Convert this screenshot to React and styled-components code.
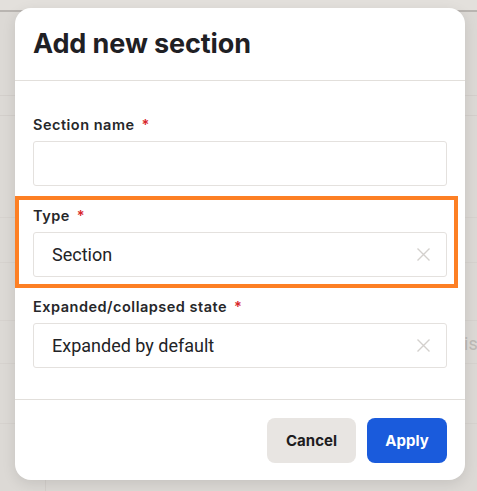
import React from "react";
import styled, { createGlobalStyle } from "styled-components";

const Global = createGlobalStyle`
  html, body { margin: 0; padding: 0; }
  body { font-family: Inter, "Noto Sans", sans-serif; }
  * { box-sizing: border-box; }
`;

const Backdrop = styled.div`
  position: relative;
  width: 477px;
  height: 491px;
  overflow: hidden;
  padding: 8px 0 0 15px;
  background-color: #dcd9d5;
  background-image:
    linear-gradient(#e3e0dc, #e3e0dc),
    linear-gradient(#b9b5b1, #b9b5b1),
    linear-gradient(#d3cfcb, #d3cfcb),
    linear-gradient(#d3cfcb, #d3cfcb),
    linear-gradient(#d6d2ce, #d6d2ce),
    linear-gradient(#d6d2ce, #d6d2ce),
    linear-gradient(#d6d2ce, #d6d2ce),
    linear-gradient(#d6d2ce, #d6d2ce),
    linear-gradient(#d6d2ce, #d6d2ce),
    linear-gradient(#d3cfcb, #d3cfcb);
  background-size:
    100% 10px,
    100% 2px,
    100% 1px,
    100% 1px,
    100% 1px,
    100% 1px,
    100% 1px,
    100% 1px,
    100% 1px,
    1px 100%;
  background-position:
    0 0,
    0 10px,
    0 95px,
    0 115px,
    0 217px,
    0 262px,
    0 320px,
    0 363px,
    0 423px,
    45px 0;
  background-repeat: no-repeat;
`;

const Ghost = styled.span`
  position: absolute;
  left: 464px;
  top: 333px;
  font-family: Roboto, sans-serif;
  font-size: 18px;
  color: #bdb9b5;
`;

const Modal = styled.div`
  position: relative;
  width: 450px;
  height: 472px;
  background: #fff;
  border-radius: 16px;
  box-shadow: 0 4px 14px rgba(0, 0, 0, 0.1);
  display: flex;
  flex-direction: column;
`;

const Header = styled.div`
  height: 73px;
  padding: 0 18px 1px;
  display: flex;
  align-items: center;
  border-bottom: 1px solid #e2dfdb;
`;

const Title = styled.h2`
  margin: 0;
  font-family: Inter, sans-serif;
  font-weight: 700;
  font-size: 27px;
  letter-spacing: -0.1px;
  color: #1f2024;
`;

const Body = styled.div`
  padding: 34px 18px 31px;
  display: flex;
  flex-direction: column;
  gap: 20px;
  border-bottom: 1px solid #e2dfdb;
`;

const Field = styled.div`
  position: relative;
  display: flex;
  flex-direction: column;
  gap: 6px;

  ${(p) =>
    p.$highlight &&
    `
    &::after {
      content: "";
      position: absolute;
      top: -10px;
      bottom: -11px;
      left: -18px;
      right: -11px;
      border: 4.5px solid #fd7f24;
      pointer-events: none;
    }
  `}
`;

const Label = styled.label`
  display: block;
  height: 20px;
  line-height: 20px;
  font-family: Inter, sans-serif;
  font-weight: 600;
  font-size: 14.5px;
  letter-spacing: 0.5px;
  color: #26272a;
`;

const Req = styled.span`
  color: #d8262a;
  margin-left: 7px;
`;

const Input = styled.div`
  height: 45px;
  border: 1px solid #e4e1de;
  border-radius: 3px;
  display: flex;
  align-items: center;
  justify-content: space-between;
  padding: 0 16px 0 18px;
  font-family: Roboto, sans-serif;
  font-size: 18px;
  color: #222326;
`;

const Clear = styled.svg`
  width: 13px;
  height: 13px;
  flex: none;
`;

const Footer = styled.div`
  flex: 1;
  display: flex;
  justify-content: flex-end;
  align-items: flex-start;
  gap: 11px;
  padding: 18px 18px 0;
`;

const Button = styled.button`
  height: 45px;
  border: none;
  border-radius: 8px;
  padding: 0;
  width: ${(p) => p.$w}px;
  font-family: Inter, sans-serif;
  font-weight: 700;
  font-size: 15px;
  background: ${(p) => (p.$primary ? "#1a5bdc" : "#e8e5e2")};
  color: ${(p) => (p.$primary ? "#ffffff" : "#1d1d1f")};
  cursor: pointer;
`;

const X = () => (
  <Clear viewBox="0 0 13 13">
    <path d="M0.5 0.5 L12.5 12.5 M12.5 0.5 L0.5 12.5" stroke="#d3d0cd" strokeWidth="1.4" fill="none" />
  </Clear>
);

export default function App() {
  return (
    <>
      <Global />
      <Backdrop>
        <Ghost>is</Ghost>
        <Modal>
          <Header>
            <Title>Add new section</Title>
          </Header>
          <Body>
            <Field>
              <Label>
                Section name<Req>*</Req>
              </Label>
              <Input />
            </Field>
            <Field $highlight>
              <Label>
                Type<Req>*</Req>
              </Label>
              <Input>
                <span>Section</span>
                <X />
              </Input>
            </Field>
            <Field>
              <Label>
                Expanded/collapsed state<Req>*</Req>
              </Label>
              <Input>
                <span>Expanded by default</span>
                <X />
              </Input>
            </Field>
          </Body>
          <Footer>
            <Button $w={89}>Cancel</Button>
            <Button $w={80} $primary>
              Apply
            </Button>
          </Footer>
        </Modal>
      </Backdrop>
    </>
  );
}
